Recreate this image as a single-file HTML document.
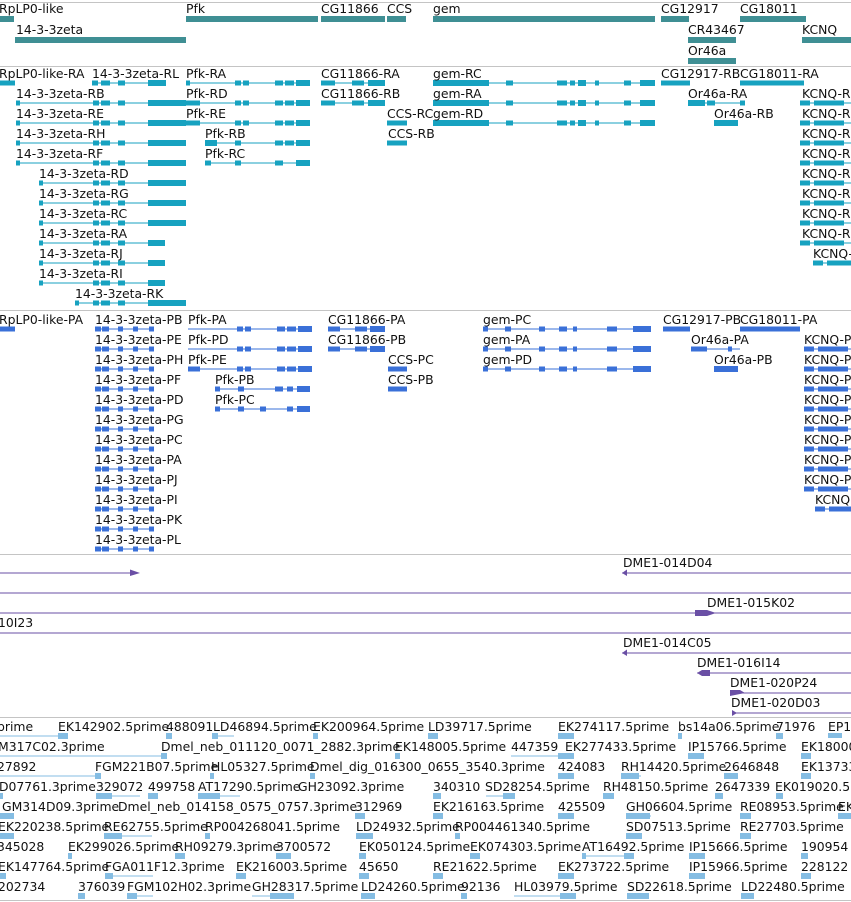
<!DOCTYPE html>
<html><head><meta charset="utf-8"><style>
html,body{margin:0;padding:0;background:#fff;width:851px;height:902px;overflow:hidden}
svg{display:block}
text{font-family:"DejaVu Sans","Liberation Sans",sans-serif;font-size:12.4px;fill:#111}
.g{fill:#3f8f94}.t{fill:#17a2c0}.p{fill:#3a70d8}.d{fill:#6a4fa5}.e{fill:#85bde3}
</style></head><body>
<svg width="851" height="902" viewBox="0 0 851 902" xmlns="http://www.w3.org/2000/svg">
<defs>
<g id="zt"><rect x="0" y="-0.5" width="170" height="1"/><rect x="0" y="-2.5" width="4" height="5"/><rect x="77" y="-2.5" width="6" height="5"/><rect x="85" y="-2.5" width="9" height="5"/><rect x="102" y="-2.5" width="7" height="5"/><rect x="132" y="-3" width="38" height="6"/></g>
<g id="zs"><rect x="0" y="-0.5" width="126" height="1"/><rect x="0" y="-2.5" width="4" height="5"/><rect x="54" y="-2.5" width="6" height="5"/><rect x="62" y="-2.5" width="9" height="5"/><rect x="79" y="-2.5" width="7" height="5"/><rect x="109" y="-3" width="17" height="6"/></g>
<g id="pf"><rect x="0" y="-0.5" width="124" height="1"/><rect x="49" y="-2.5" width="6" height="5"/><rect x="57" y="-2.5" width="6" height="5"/><rect x="89" y="-2.5" width="8" height="5"/><rect x="99" y="-2.5" width="9" height="5"/><rect x="110" y="-3" width="14" height="6"/></g>
<g id="kq"><rect x="0" y="-0.5" width="51" height="1"/><rect x="0" y="-2.5" width="10" height="5"/><rect x="14" y="-2.5" width="30" height="5"/></g>
<g id="zp"><rect x="0" y="-0.5" width="58" height="1"/><rect x="0" y="-2.5" width="6" height="5"/><rect x="7" y="-2.5" width="7" height="5"/><rect x="23" y="-2.5" width="5" height="5"/><rect x="38" y="-2.5" width="5" height="5"/><rect x="54" y="-2.5" width="5" height="5"/></g>
<g id="gm"><rect x="0" y="-0.5" width="222" height="1"/><rect x="0" y="-3" width="56" height="6"/><rect x="73" y="-2.5" width="7" height="5"/><rect x="124" y="-2.5" width="10" height="5"/><rect x="137" y="-2.5" width="5" height="5"/><rect x="145" y="-3" width="8" height="6"/><rect x="162" y="-2.5" width="4" height="5"/><rect x="191" y="-2.5" width="7" height="5"/><rect x="207" y="-3" width="15" height="6"/></g>
<g id="gp"><rect x="0" y="-0.5" width="168" height="1"/><rect x="0" y="-2.5" width="5" height="5"/><rect x="22" y="-2.5" width="6" height="5"/><rect x="56" y="-2.5" width="6" height="5"/><rect x="76" y="-2.5" width="8" height="5"/><rect x="90" y="-2.5" width="4" height="5"/><rect x="124" y="-2.5" width="10" height="5"/><rect x="150" y="-3" width="18" height="6"/></g>
</defs>
<rect x="0" y="2" width="851" height="1" fill="#c4c4c4"/>
<rect x="0" y="66" width="851" height="1" fill="#c4c4c4"/>
<rect x="0" y="310" width="851" height="1" fill="#c4c4c4"/>
<rect x="0" y="554" width="851" height="1" fill="#c4c4c4"/>
<rect x="0" y="717" width="851" height="1" fill="#c4c4c4"/>
<rect x="0" y="900" width="851" height="1" fill="#c4c4c4"/>

<g class="g">
<rect x="0" y="16" width="14" height="6"/><rect x="186" y="16" width="132" height="6"/><rect x="321" y="16" width="64" height="6"/><rect x="387" y="16" width="19" height="6"/><rect x="433" y="16" width="222" height="6"/><rect x="661" y="16" width="28" height="6"/><rect x="740" y="16" width="66" height="6"/>
<rect x="15" y="37" width="171" height="6"/><rect x="688" y="37" width="48" height="6"/><rect x="802" y="37" width="49" height="6"/>
<rect x="688" y="58" width="48" height="6"/>
</g>
<text x="-1" y="13">RpLP0-like</text><text x="186" y="13">Pfk</text><text x="321" y="13">CG11866</text><text x="387" y="13">CCS</text><text x="433" y="13">gem</text><text x="661" y="13">CG12917</text><text x="740" y="13">CG18011</text>
<text x="16" y="34">14-3-3zeta</text><text x="688" y="34">CR43467</text><text x="802" y="34">KCNQ</text>
<text x="688" y="55">Or46a</text>

<g class="t">
<rect x="0" y="80.5" width="15" height="5"/>
<g transform="translate(92,83)"><rect x="0" y="-0.5" width="73" height="1"/><rect x="0" y="-2.5" width="6" height="5"/><rect x="9" y="-2.5" width="9" height="5"/><rect x="26" y="-2.5" width="7" height="5"/><rect x="56" y="-3" width="18" height="6"/></g>
<use href="#pf" x="186" y="83"/><rect x="186" y="80.5" width="4" height="5"/>
<g transform="translate(321,83)"><rect x="0" y="-0.5" width="64" height="1"/><rect x="0" y="-2.5" width="14" height="5"/><rect x="31" y="-2.5" width="12" height="5"/><rect x="47" y="-3" width="17" height="6"/></g>
<use href="#gm" x="433" y="83"/>
<rect x="661" y="80.5" width="29" height="5"/>
<rect x="740" y="80.5" width="64" height="5"/>
<use href="#zt" x="16" y="103"/><use href="#pf" x="186" y="103"/><rect x="186" y="100.5" width="14" height="5"/>
<g transform="translate(321,103)"><rect x="0" y="-0.5" width="64" height="1"/><rect x="0" y="-2.5" width="14" height="5"/><rect x="31" y="-2.5" width="12" height="5"/><rect x="47" y="-3" width="17" height="6"/></g>
<use href="#gm" x="433" y="103"/>
<g transform="translate(688,103)"><rect x="0" y="-0.5" width="57" height="1"/><rect x="0" y="-3" width="17" height="6"/><rect x="19" y="-2.5" width="8" height="5"/><rect x="52" y="-2.5" width="5" height="5"/></g>
<use href="#zt" x="16" y="123"/><use href="#pf" x="186" y="123"/><rect x="186" y="120.5" width="14" height="5"/>
<rect x="387" y="120.5" width="20" height="5"/><use href="#gm" x="433" y="123"/>
<rect x="714" y="120" width="24" height="6"/>
<use href="#zt" x="16" y="143"/><g transform="translate(205,143)"><rect x="0" y="-0.5" width="105" height="1"/><rect x="0" y="-3" width="12" height="6"/><rect x="30" y="-2.5" width="6" height="5"/><rect x="70" y="-2.5" width="8" height="5"/><rect x="80" y="-2.5" width="9" height="5"/><rect x="91" y="-3" width="14" height="6"/></g>
<rect x="387" y="140.5" width="20" height="5"/>
<use href="#zt" x="16" y="163"/><g transform="translate(205,163)"><rect x="0" y="-0.5" width="105" height="1"/><rect x="0" y="-2.5" width="6" height="5"/><rect x="30" y="-2.5" width="6" height="5"/><rect x="70" y="-2.5" width="8" height="5"/><rect x="91" y="-3" width="14" height="6"/></g>
<g transform="translate(39,183)"><use href="#zs"/><rect x="0" y="-0.5" width="147" height="1"/><rect x="109" y="-3" width="38" height="6"/></g>
<g transform="translate(39,203)"><use href="#zs"/><rect x="0" y="-0.5" width="147" height="1"/><rect x="109" y="-3" width="38" height="6"/></g>
<g transform="translate(39,223)"><use href="#zs"/><rect x="0" y="-0.5" width="147" height="1"/><rect x="109" y="-3" width="38" height="6"/></g>
<use href="#zs" x="39" y="243"/><use href="#zs" x="39" y="263"/><use href="#zs" x="39" y="283"/>
<g transform="translate(75,303)"><rect x="0" y="-0.5" width="111" height="1"/><rect x="0" y="-2.5" width="4" height="5"/><rect x="18" y="-2.5" width="6" height="5"/><rect x="26" y="-2.5" width="9" height="5"/><rect x="43" y="-2.5" width="7" height="5"/><rect x="73" y="-3" width="38" height="6"/></g>
<use href="#kq" x="800" y="103"/><use href="#kq" x="800" y="123"/><use href="#kq" x="800" y="143"/><use href="#kq" x="800" y="163"/><use href="#kq" x="800" y="183"/><use href="#kq" x="800" y="203"/><use href="#kq" x="800" y="223"/><use href="#kq" x="800" y="243"/><use href="#kq" x="813" y="263"/>
</g>
<text x="-1" y="78">RpLP0-like-RA</text><text x="92" y="78">14-3-3zeta-RL</text><text x="186" y="78">Pfk-RA</text><text x="321" y="78">CG11866-RA</text><text x="433" y="78">gem-RC</text><text x="661" y="78">CG12917-RB</text><text x="740" y="78">CG18011-RA</text>
<text x="16" y="98">14-3-3zeta-RB</text><text x="186" y="98">Pfk-RD</text><text x="321" y="98">CG11866-RB</text><text x="433" y="98">gem-RA</text><text x="688" y="98">Or46a-RA</text><text x="802" y="98">KCNQ-R</text>
<text x="16" y="118">14-3-3zeta-RE</text><text x="186" y="118">Pfk-RE</text><text x="387" y="118">CCS-RC</text><text x="433" y="118">gem-RD</text><text x="714" y="118">Or46a-RB</text><text x="802" y="118">KCNQ-R</text>
<text x="16" y="138">14-3-3zeta-RH</text><text x="205" y="138">Pfk-RB</text><text x="388" y="138">CCS-RB</text><text x="802" y="138">KCNQ-R</text>
<text x="16" y="158">14-3-3zeta-RF</text><text x="205" y="158">Pfk-RC</text><text x="802" y="158">KCNQ-R</text>
<text x="39" y="178">14-3-3zeta-RD</text><text x="802" y="178">KCNQ-R</text>
<text x="39" y="198">14-3-3zeta-RG</text><text x="802" y="198">KCNQ-R</text>
<text x="39" y="218">14-3-3zeta-RC</text><text x="802" y="218">KCNQ-R</text>
<text x="39" y="238">14-3-3zeta-RA</text><text x="802" y="238">KCNQ-R</text>
<text x="39" y="258">14-3-3zeta-RJ</text><text x="813" y="258">KCNQ-R</text>
<text x="39" y="278">14-3-3zeta-RI</text>
<text x="75" y="298">14-3-3zeta-RK</text>

<g class="p">
<rect x="0" y="326.5" width="15" height="5"/>
<use href="#zp" x="95" y="329"/><use href="#zp" x="95" y="349"/><use href="#zp" x="95" y="369"/><use href="#zp" x="95" y="389"/><use href="#zp" x="95" y="409"/><use href="#zp" x="95" y="429"/><use href="#zp" x="95" y="449"/><use href="#zp" x="95" y="469"/><use href="#zp" x="95" y="489"/><use href="#zp" x="95" y="509"/><use href="#zp" x="95" y="529"/><use href="#zp" x="95" y="549"/>
<use href="#pf" x="188" y="329"/><use href="#pf" x="188" y="349"/><use href="#pf" x="188" y="369"/><rect x="188" y="366.5" width="12" height="5"/>
<g transform="translate(215,389)"><rect x="0" y="-0.5" width="95" height="1"/><rect x="0" y="-2.5" width="5" height="5"/><rect x="23" y="-2.5" width="6" height="5"/><rect x="60" y="-2.5" width="8" height="5"/><rect x="72" y="-2.5" width="6" height="5"/><rect x="82" y="-3" width="13" height="6"/></g>
<g transform="translate(215,409)"><rect x="0" y="-0.5" width="95" height="1"/><rect x="0" y="-2.5" width="5" height="5"/><rect x="23" y="-2.5" width="6" height="5"/><rect x="45" y="-2.5" width="6" height="5"/><rect x="72" y="-2.5" width="6" height="5"/><rect x="82" y="-3" width="13" height="6"/></g>
<g transform="translate(328,329)"><rect x="0" y="-0.5" width="57" height="1"/><rect x="0" y="-2.5" width="12" height="5"/><rect x="27" y="-2.5" width="12" height="5"/><rect x="42" y="-3" width="15" height="6"/></g>
<g transform="translate(328,349)"><rect x="0" y="-0.5" width="57" height="1"/><rect x="0" y="-2.5" width="12" height="5"/><rect x="27" y="-2.5" width="12" height="5"/><rect x="42" y="-3" width="15" height="6"/></g>
<rect x="388" y="366.5" width="19" height="5"/><rect x="388" y="386.5" width="19" height="5"/>
<use href="#gp" x="483" y="329"/><use href="#gp" x="483" y="349"/><use href="#gp" x="483" y="369"/>
<rect x="663" y="326.5" width="27" height="5"/><rect x="740" y="326.5" width="60" height="5"/>
<g transform="translate(691,349)"><rect x="0" y="-0.5" width="49" height="1"/><rect x="0" y="-2.5" width="16" height="5"/><rect x="37" y="-2.5" width="4" height="5"/></g>
<rect x="714" y="366" width="24" height="6"/>
<use href="#kq" x="804" y="349"/><use href="#kq" x="804" y="369"/><use href="#kq" x="804" y="389"/><use href="#kq" x="804" y="409"/><use href="#kq" x="804" y="429"/><use href="#kq" x="804" y="449"/><use href="#kq" x="804" y="469"/><use href="#kq" x="804" y="489"/><use href="#kq" x="815" y="509"/>
</g>
<text x="-1" y="324">RpLP0-like-PA</text><text x="95" y="324">14-3-3zeta-PB</text><text x="188" y="324">Pfk-PA</text><text x="328" y="324">CG11866-PA</text><text x="483" y="324">gem-PC</text><text x="663" y="324">CG12917-PB</text><text x="740" y="324">CG18011-PA</text>
<text x="95" y="344">14-3-3zeta-PE</text><text x="188" y="344">Pfk-PD</text><text x="328" y="344">CG11866-PB</text><text x="483" y="344">gem-PA</text><text x="691" y="344">Or46a-PA</text><text x="804" y="344">KCNQ-P</text>
<text x="95" y="364">14-3-3zeta-PH</text><text x="188" y="364">Pfk-PE</text><text x="388" y="364">CCS-PC</text><text x="483" y="364">gem-PD</text><text x="714" y="364">Or46a-PB</text><text x="804" y="364">KCNQ-P</text>
<text x="95" y="384">14-3-3zeta-PF</text><text x="215" y="384">Pfk-PB</text><text x="388" y="384">CCS-PB</text><text x="804" y="384">KCNQ-P</text>
<text x="95" y="404">14-3-3zeta-PD</text><text x="215" y="404">Pfk-PC</text><text x="804" y="404">KCNQ-P</text>
<text x="95" y="424">14-3-3zeta-PG</text><text x="804" y="424">KCNQ-P</text>
<text x="95" y="444">14-3-3zeta-PC</text><text x="804" y="444">KCNQ-P</text>
<text x="95" y="464">14-3-3zeta-PA</text><text x="804" y="464">KCNQ-P</text>
<text x="95" y="484">14-3-3zeta-PJ</text><text x="804" y="484">KCNQ-P</text>
<text x="95" y="504">14-3-3zeta-PI</text><text x="815" y="504">KCNQ-P</text>
<text x="95" y="524">14-3-3zeta-PK</text>
<text x="95" y="544">14-3-3zeta-PL</text>

<g class="d">
<rect x="0" y="572.5" width="138" height="1"/><polygon points="130,569.5 140,573 130,576"/>
<rect x="622" y="572.5" width="229" height="1"/><polygon points="622,573 627,569.5 627,576"/>
<rect x="0" y="592.5" width="851" height="1"/>
<rect x="0" y="612.5" width="851" height="1"/><polygon points="695,610 707,610 709,613 707,616 695,616"/><polygon points="707,610 716,613 707,616"/>
<rect x="0" y="632.5" width="851" height="1"/>
<rect x="622" y="652.5" width="229" height="1"/><polygon points="622,653 627,649.5 627,656"/>
<rect x="697" y="672.5" width="154" height="1"/><polygon points="697,673 702,670 710,670 710,676 702,676"/>
<rect x="730" y="692.5" width="121" height="1"/><polygon points="730,690 740,690 745,693 730,696"/>
<rect x="732" y="712.5" width="119" height="1"/><polygon points="732,710 737,713 732,716"/>
</g>
<text x="623" y="567">DME1-014D04</text>
<text x="707" y="607">DME1-015K02</text>
<text x="-2" y="627">10I23</text>
<text x="623" y="647">DME1-014C05</text>
<text x="697" y="667">DME1-016I14</text>
<text x="730" y="687">DME1-020P24</text>
<text x="731" y="707">DME1-020D03</text>

<g class="e">
<rect x="0" y="735.5" width="60" height="1"/><rect x="58" y="733" width="10" height="6"/><rect x="166" y="733" width="6" height="6"/><rect x="212" y="735.5" width="22" height="1"/><rect x="212" y="733" width="6" height="6"/><rect x="313" y="733" width="5" height="6"/><rect x="428" y="733" width="10" height="6"/><rect x="558" y="733" width="16" height="6"/><rect x="678" y="733" width="4" height="6"/><rect x="776" y="733" width="7" height="6"/><rect x="828" y="733" width="14" height="5"/>
<rect x="0" y="755.5" width="165" height="1"/><rect x="161" y="753" width="6" height="6"/><rect x="395" y="753" width="5" height="6"/><rect x="511" y="755.5" width="52" height="1"/><rect x="558" y="753" width="16" height="6"/><rect x="688" y="753" width="16" height="6"/><rect x="801" y="753" width="10" height="6"/>
<rect x="0" y="775.5" width="98" height="1"/><rect x="95" y="773" width="6" height="6"/><rect x="210" y="773" width="4" height="6"/><rect x="310" y="773" width="5" height="6"/><rect x="558" y="773" width="16" height="6"/><rect x="621" y="775.5" width="20" height="1"/><rect x="621" y="773" width="18" height="6"/><rect x="724" y="773" width="14" height="6"/><rect x="801" y="773" width="10" height="6"/>
<rect x="0" y="793" width="3" height="6"/><rect x="96" y="793" width="16" height="6"/><rect x="96" y="795.5" width="44" height="1"/><rect x="148" y="793" width="10" height="6"/><rect x="198" y="795.5" width="42" height="1"/><rect x="198" y="793" width="22" height="6"/><rect x="433" y="793" width="8" height="6"/><rect x="486" y="795.5" width="28" height="1"/><rect x="503" y="793" width="12" height="6"/><rect x="603" y="793" width="11" height="6"/><rect x="715" y="793" width="8" height="6"/><rect x="776" y="793" width="7" height="6"/>
<rect x="0" y="813" width="14" height="6"/><rect x="355" y="813" width="10" height="6"/><rect x="433" y="813" width="10" height="6"/><rect x="558" y="813" width="16" height="6"/><rect x="626" y="815.5" width="25" height="1"/><rect x="626" y="813" width="24" height="6"/><rect x="740" y="813" width="11" height="6"/><rect x="838" y="813" width="13" height="6"/>
<rect x="0" y="833" width="14" height="6"/><rect x="104" y="835.5" width="48" height="1"/><rect x="104" y="833" width="18" height="6"/><rect x="205" y="833" width="5" height="6"/><rect x="356" y="833" width="17" height="6"/><rect x="455" y="833" width="5" height="6"/><rect x="626" y="833" width="16" height="6"/><rect x="740" y="833" width="11" height="6"/>
<rect x="68" y="853" width="4" height="6"/><rect x="175" y="853" width="10" height="6"/><rect x="276" y="853" width="15" height="6"/><rect x="359" y="853" width="7" height="6"/><rect x="470" y="853" width="10" height="6"/><rect x="582" y="855.5" width="44" height="1"/><rect x="582" y="853" width="4" height="6"/><rect x="624" y="853" width="10" height="6"/><rect x="689" y="853" width="16" height="6"/><rect x="801" y="853" width="7" height="6"/>
<rect x="0" y="873" width="6" height="6"/><rect x="105" y="875.5" width="48" height="1"/><rect x="105" y="873" width="8" height="6"/><rect x="236" y="873" width="10" height="6"/><rect x="359" y="873" width="10" height="6"/><rect x="433" y="873" width="10" height="6"/><rect x="558" y="873" width="16" height="6"/><rect x="689" y="873" width="16" height="6"/><rect x="801" y="873" width="10" height="6"/>
<rect x="78" y="893" width="7" height="6"/><rect x="127" y="895.5" width="26" height="1"/><rect x="127" y="893" width="10" height="6"/><rect x="252" y="895.5" width="42" height="1"/><rect x="270" y="893" width="24" height="6"/><rect x="361" y="893" width="14" height="6"/><rect x="461" y="893" width="6" height="6"/><rect x="514" y="895.5" width="62" height="1"/><rect x="560" y="893" width="16" height="6"/><rect x="627" y="895.5" width="22" height="1"/><rect x="627" y="893" width="22" height="6"/><rect x="741" y="893" width="13" height="6"/>
</g>
<text x="-3" y="731">prime</text><text x="58" y="731">EK142902.5prime</text><text x="166" y="731">488091</text><text x="213" y="731">LD46894.5prime</text><text x="313" y="731">EK200964.5prime</text><text x="428" y="731">LD39717.5prime</text><text x="558" y="731">EK274117.5prime</text><text x="678" y="731">bs14a06.5prime</text><text x="776" y="731">71976</text><text x="828" y="731">EP1</text>
<text x="-2" y="751">M317C02.3prime</text><text x="161" y="751">Dmel_neb_011120_0071_2882.3prime</text><text x="395" y="751">EK148005.5prime</text><text x="511" y="751">447359</text><text x="565" y="751">EK277433.5prime</text><text x="688" y="751">IP15766.5prime</text><text x="801" y="751">EK18000</text>
<text x="-3" y="771">27892</text><text x="95" y="771">FGM221B07.5prime</text><text x="211" y="771">HL05327.5prime</text><text x="310" y="771">Dmel_dig_016300_0655_3540.3prime</text><text x="558" y="771">424083</text><text x="621" y="771">RH14420.5prime</text><text x="724" y="771">2646848</text><text x="801" y="771">EK13733</text>
<text x="-1" y="791">D07761.3prime</text><text x="96" y="791">329072</text><text x="148" y="791">499758</text><text x="198" y="791">AT17290.5prime</text><text x="298" y="791">GH23092.3prime</text><text x="433" y="791">340310</text><text x="485" y="791">SD28254.5prime</text><text x="603" y="791">RH48150.5prime</text><text x="715" y="791">2647339</text><text x="775" y="791">EK019020.5</text>
<text x="2" y="811">GM314D09.3prime</text><text x="118" y="811">Dmel_neb_014158_0575_0757.3prime</text><text x="355" y="811">312969</text><text x="433" y="811">EK216163.5prime</text><text x="558" y="811">425509</text><text x="626" y="811">GH06604.5prime</text><text x="740" y="811">RE08953.5prime</text><text x="838" y="811">EK</text>
<text x="-2" y="831">EK220238.5prime</text><text x="104" y="831">RE62755.5prime</text><text x="205" y="831">RP004268041.5prime</text><text x="356" y="831">LD24932.5prime</text><text x="455" y="831">RP004461340.5prime</text><text x="626" y="831">SD07513.5prime</text><text x="740" y="831">RE27703.5prime</text>
<text x="-3" y="851">345028</text><text x="68" y="851">EK299026.5prime</text><text x="175" y="851">RH09279.3prime</text><text x="276" y="851">3700572</text><text x="359" y="851">EK050124.5prime</text><text x="470" y="851">EK074303.5prime</text><text x="582" y="851">AT16492.5prime</text><text x="689" y="851">IP15666.5prime</text><text x="801" y="851">190954</text>
<text x="-2" y="871">EK147764.5prime</text><text x="105" y="871">FGA011F12.3prime</text><text x="236" y="871">EK216003.5prime</text><text x="359" y="871">45650</text><text x="433" y="871">RE21622.5prime</text><text x="558" y="871">EK273722.5prime</text><text x="689" y="871">IP15966.5prime</text><text x="801" y="871">228122</text>
<text x="-2" y="891">202734</text><text x="78" y="891">376039</text><text x="127" y="891">FGM102H02.3prime</text><text x="252" y="891">GH28317.5prime</text><text x="361" y="891">LD24260.5prime</text><text x="461" y="891">92136</text><text x="514" y="891">HL03979.5prime</text><text x="627" y="891">SD22618.5prime</text><text x="741" y="891">LD22480.5prime</text>
</svg>
</body></html>
